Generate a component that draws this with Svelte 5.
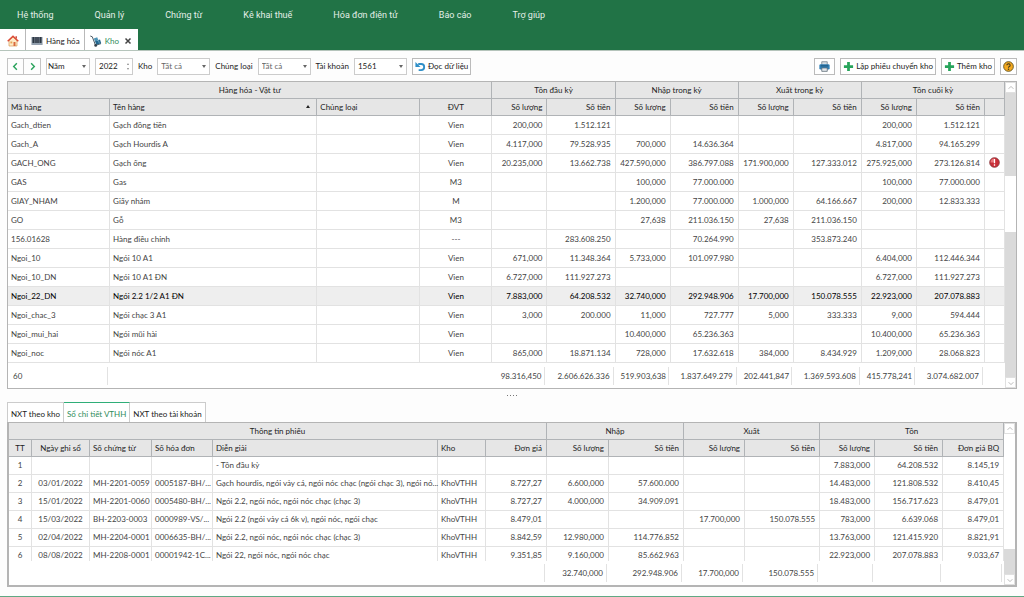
<script lang="ts">
	type Col = { label: string; w: number; align?: string; sort?: boolean };

	const menus = ['Hệ thống', 'Quản lý', 'Chứng từ', 'Kê khai thuế', 'Hóa đơn điện tử', 'Báo cáo', 'Trợ giúp'];

	const stockGroups = [
		{ label: 'Hàng hóa - Vật tư', span: 4 },
		{ label: 'Tồn đầu kỳ', span: 2 },
		{ label: 'Nhập trong kỳ', span: 2 },
		{ label: 'Xuất trong kỳ', span: 2 },
		{ label: 'Tồn cuối kỳ', span: 3 }
	];
	const stockCols: Col[] = [
		{ label: 'Mã hàng', w: 102 },
		{ label: 'Tên hàng', w: 207, sort: true },
		{ label: 'Chủng loại', w: 103 },
		{ label: 'ĐVT', w: 72, align: 'center' },
		{ label: 'Số lượng', w: 55, align: 'right' },
		{ label: 'Số tiền', w: 68, align: 'right' },
		{ label: 'Số lượng', w: 55, align: 'right' },
		{ label: 'Số tiền', w: 68, align: 'right' },
		{ label: 'Số lượng', w: 55, align: 'right' },
		{ label: 'Số tiền', w: 68, align: 'right' },
		{ label: 'Số lượng', w: 55, align: 'right' },
		{ label: 'Số tiền', w: 68, align: 'right' },
		{ label: '', w: 20, align: 'center' }
	];
	const stock = [
		['Gach_dtien', 'Gạch đồng tiền', '', 'Vien', '200,000', '1.512.121', '', '', '', '', '200,000', '1.512.121', ''],
		['Gach_A', 'Gạch Hourdis A', '', 'Vien', '4.117,000', '79.528.935', '700,000', '14.636.364', '', '', '4.817,000', '94.165.299', ''],
		['GACH_ONG', 'Gạch ống', '', 'Vien', '20.235,000', '13.662.738', '427.590,000', '386.797.088', '171.900,000', '127.333.012', '275.925,000', '273.126.814', '!'],
		['GAS', 'Gas', '', 'M3', '', '', '100,000', '77.000.000', '', '', '100,000', '77.000.000', ''],
		['GIAY_NHAM', 'Giấy nhám', '', 'M', '', '', '1.200,000', '77.000.000', '1.000,000', '64.166.667', '200,000', '12.833.333', ''],
		['GO', 'Gỗ', '', 'M3', '', '', '27,638', '211.036.150', '27,638', '211.036.150', '', '', ''],
		['156.01628', 'Hàng điều chỉnh', '', '---', '', '283.608.250', '', '70.264.990', '', '353.873.240', '', '', ''],
		['Ngoi_10', 'Ngói 10 A1', '', 'Vien', '671,000', '11.348.364', '5.733,000', '101.097.980', '', '', '6.404,000', '112.446.344', ''],
		['Ngoi_10_DN', 'Ngói 10 A1 ĐN', '', 'Vien', '6.727,000', '111.927.273', '', '', '', '', '6.727,000', '111.927.273', ''],
		['Ngoi_22_DN', 'Ngói 2.2 1/2 A1 ĐN', '', 'Vien', '7.883,000', '64.208.532', '32.740,000', '292.948.906', '17.700,000', '150.078.555', '22.923,000', '207.078.883', ''],
		['Ngoi_chac_3', 'Ngói chạc 3 A1', '', 'Vien', '3,000', '200.000', '11,000', '727.777', '5,000', '333.333', '9,000', '594.444', ''],
		['Ngoi_mui_hai', 'Ngói mũi hài', '', 'Vien', '', '', '10.400,000', '65.236.363', '', '', '10.400,000', '65.236.363', ''],
		['Ngoi_noc', 'Ngói nóc A1', '', 'Vien', '865,000', '18.871.134', '728,000', '17.632.618', '384,000', '8.434.929', '1.209,000', '28.068.823', '']
	];
	const stockTotal = ['60', '', '', '', '98.316,450', '2.606.626.336', '519.903,638', '1.837.649.279', '202.441,847', '1.369.593.608', '415.778,241', '3.074.682.007', ''];

	const detailGroups = [
		{ label: 'Thông tin phiếu', span: 7 },
		{ label: 'Nhập', span: 2 },
		{ label: 'Xuất', span: 2 },
		{ label: 'Tồn', span: 3 }
	];
	const detailCols: Col[] = [
		{ label: 'TT', w: 23, align: 'center' },
		{ label: 'Ngày ghi sổ', w: 58, align: 'center' },
		{ label: 'Số chứng từ', w: 62 },
		{ label: 'Số hóa đơn', w: 61 },
		{ label: 'Diễn giải', w: 225 },
		{ label: 'Kho', w: 48 },
		{ label: 'Đơn giá', w: 61, align: 'right' },
		{ label: 'Số lượng', w: 62, align: 'right' },
		{ label: 'Số tiền', w: 75, align: 'right' },
		{ label: 'Số lượng', w: 61, align: 'right' },
		{ label: 'Số tiền', w: 75, align: 'right' },
		{ label: 'Số lượng', w: 55, align: 'right' },
		{ label: 'Số tiền', w: 68, align: 'right' },
		{ label: 'Đơn giá BQ', w: 61, align: 'right' }
	];
	const detail = [
		['1', '', '', '', '- Tồn đầu kỳ', '', '', '', '', '', '', '7.883,000', '64.208.532', '8.145,19'],
		['2', '03/01/2022', 'MH-2201-0059', '0005187-BH/...', 'Gạch hourdis, ngói vảy cá, ngói nóc chạc (ngói chạc 3), ngói nó...', 'KhoVTHH', '8.727,27', '6.600,000', '57.600.000', '', '', '14.483,000', '121.808.532', '8.410,45'],
		['3', '15/01/2022', 'MH-2201-0060', '0005480-BH/...', 'Ngói 2.2, ngói nóc, ngói nóc chạc (chạc 3)', 'KhoVTHH', '8.727,27', '4.000,000', '34.909.091', '', '', '18.483,000', '156.717.623', '8.479,01'],
		['4', '15/03/2022', 'BH-2203-0003', '0000989-VS/...', 'Ngói 2.2 (ngói vảy cá 6k v), ngói nóc, ngói chạc', 'KhoVTHH', '8.479,01', '', '', '17.700,000', '150.078.555', '783,000', '6.639.068', '8.479,01'],
		['5', '02/04/2022', 'MH-2204-0001', '0006635-BH/...', 'Ngói 2.2, ngói nóc, ngói nóc chạc (chạc 3)', 'KhoVTHH', '8.842,59', '12.980,000', '114.776.852', '', '', '13.763,000', '121.415.920', '8.821,91'],
		['6', '08/08/2022', 'MH-2208-0001', '00001942-1C...', 'Ngói 22, ngói nóc, ngói nóc chạc', 'KhoVTHH', '9.351,85', '9.160,000', '85.662.963', '', '', '22.923,000', '207.078.883', '9.033,67']
	];
	const detailTotal = ['', '', '', '', '', '', '', '32.740,000', '292.948.906', '17.700,000', '150.078.555', '', '', ''];

	let selected = $state(9);
	let year = $state('2022');
	let account = $state('1561');
	let panel = $state(1);
	const panels = ['NXT theo kho', 'Sổ chi tiết VTHH', 'NXT theo tài khoản'];
</script>

{#snippet scrollbar(before: number, thumb: number, after: number)}
	<div class="scrollbar">
		<button aria-label="Cuộn lên"><svg viewBox="0 0 10 10"><path d="M2 6l3-3 3 3" /></svg></button>
		<div class="track">
			<div style="flex: {before}"></div>
			<div class="thumb" style="flex: {thumb}"></div>
			<div style="flex: {after}"></div>
		</div>
		<button aria-label="Cuộn xuống"><svg viewBox="0 0 10 10"><path d="M2 4l3 3 3-3" /></svg></button>
	</div>
{/snippet}

{#snippet head(groups: { label: string; span: number }[], cols: Col[])}
	<colgroup>
		{#each cols as col}<col style="width: {col.w}px" />{/each}
	</colgroup>
	<thead>
		<tr>
			{#each groups as group}<th class="center" colspan={group.span}>{group.label}</th>{/each}
		</tr>
		<tr>
			{#each cols as col}
				<th class={col.align}>{col.label}{#if col.sort}<i class="sort"></i>{/if}</th>
			{/each}
		</tr>
	</thead>
{/snippet}

<div class="app">
	<header>
		<nav class="menu">
			{#each menus as menu}<a href="#menu">{menu}</a>{/each}
		</nav>
		<div class="tabs">
			<button class="home" aria-label="Trang chủ">
				<svg viewBox="0 0 12 12">
					<path d="M2 5.5V11h8V5.5L6 2z" fill="#fdebc8" stroke="#d99a55" stroke-width=".7" />
					<path d="M8.5 1.2h1.4V4L8.5 2.8z" fill="#c8402f" />
					<path d="M.7 6.3 6 1.3l5.3 5" fill="none" stroke="#dc4a36" stroke-width="1.5" />
					<path d="M3.4 6.5h1.9v1.9H3.4z" fill="#e5a052" /><path d="M6.5 7h2v4h-2z" fill="#d8693e" />
				</svg>
			</button>
			<button>
				<svg viewBox="0 0 12 12">
					<path d="M.5 2h11v8H.5z" fill="#8592a0" />
					<path d="M1 2h10v6H1z" fill="#5a6673" />
					<path d="M2.5 2v6M5 2v6M7 2v6M9.5 2v6" stroke="#212a35" stroke-width=".8" />
					<path d="M1 9h10" stroke="#aab8c6" stroke-width=".8" />
				</svg>
				Hàng hóa
			</button>
			<button class="active">
				<svg viewBox="0 0 12 12">
					<path d="M.3 1l2 .8 3.2 8.5 5.5-1.7" fill="none" stroke="#4b5963" stroke-width="1" />
					<path d="M3.8 3.6l3.4-1.4 1.2 3-3.4 1.3z" fill="#4f95b8" />
					<path d="M5 6.3l5-1.8 1.2 3.7-4.9 1.5z" fill="#23668d" />
					<path d="M7 5.7l1.3-.4 1 2.9" fill="none" stroke="#8dc0d8" stroke-width=".6" />
					<circle cx="5.7" cy="10.4" r="1.4" fill="#35424c" />
				</svg>
				Kho
				<svg class="close" viewBox="0 0 8 8"><path d="M1.5 1.5l5 5m0-5l-5 5" /></svg>
			</button>
		</div>
	</header>

	<div class="toolbar">
		<div class="pager">
			<button aria-label="Kỳ trước"><svg viewBox="0 0 10 10"><path d="M6.5 1.5L3 5l3.5 3.5" /></svg></button>
			<button aria-label="Kỳ sau"><svg viewBox="0 0 10 10"><path d="M3.5 1.5L7 5 3.5 8.5" /></svg></button>
		</div>
		<div class="select period">
			<select aria-label="Kỳ"><option>Năm</option><option>Quý</option><option>Tháng</option></select>
		</div>
		<div class="spin">
			<input aria-label="Năm" bind:value={year} />
			<span class="arrows"><i class="up"></i><i class="down"></i></span>
		</div>
		<label for="kho">Kho</label>
		<div class="select muted">
			<select id="kho"><option>Tất cả</option></select>
		</div>
		<label for="loai">Chủng loại</label>
		<div class="select muted">
			<select id="loai"><option>Tất cả</option></select>
		</div>
		<label for="tk">Tài khoản</label>
		<div class="select">
			<select id="tk" bind:value={account}><option>1561</option><option>1562</option></select>
		</div>
		<button class="btn">
			<svg viewBox="0 0 12 12">
				<path d="M3.5 3.3h3.2a3.3 3.3 0 0 1 0 6.7H4" fill="none" stroke="#2f8fc8" stroke-width="2" />
				<path d="M.5 1v5.5H6z" fill="#2f8fc8" />
			</svg>
			Đọc dữ liệu
		</button>
		<span class="spacer"></span>
		<button class="btn icon" aria-label="In">
			<svg viewBox="0 0 12 12">
				<path d="M3 .8h6V5H3z" fill="#d5dde3" stroke="#6b7883" stroke-width=".8" />
				<rect x=".4" y="3.5" width="11.2" height="5.8" rx="1.5" fill="#2f7fb5" />
				<path d="M2 5.3h8" stroke="#1b4a6c" stroke-width=".9" />
				<path d="M3 7.6h6v3.7H3z" fill="#e3e8ec" stroke="#53616d" stroke-width=".8" />
			</svg>
		</button>
		<button class="btn">
			<svg viewBox="0 0 12 12"><path d="M6 1v10M1 6h10" stroke="#27a45b" stroke-width="3" /></svg>
			Lập phiếu chuyển kho
		</button>
		<button class="btn">
			<svg viewBox="0 0 12 12"><path d="M6 1v10M1 6h10" stroke="#27a45b" stroke-width="3" /></svg>
			Thêm kho
		</button>
		<button class="btn help" aria-label="Trợ giúp">
			<svg viewBox="0 0 12 12">
				<circle cx="6" cy="6" r="5.3" fill="#f4a91f" stroke="#62531f" stroke-width="1" />
				<path d="M4.2 4.7a1.8 1.6 0 1 1 2.6 1.4Q6 6.5 6 7.3" fill="none" stroke="#43391c" stroke-width="1.2" />
				<circle cx="6" cy="9" r=".8" fill="#43391c" />
			</svg>
		</button>
	</div>

	<main>
		<section class="grid stock">
			<div class="view">
				<table>
					{@render head(stockGroups, stockCols)}
					<tbody>
						{#each stock as row, r}
							<tr class:selected={r === selected} onclick={() => (selected = r)}>
								{#each row as cell, c}
									<td class={stockCols[c].align}>
										{#if cell === '!'}
											<svg class="alert" viewBox="0 0 12 12">
												<circle cx="6" cy="6" r="5.3" fill="#c92f38" stroke="#7d3036" stroke-width=".8" />
												<path d="M1.7 6a4.3 4.3 0 0 1 4.3-4.3V6z" fill="#e8777b" />
												<path d="M6 2.3v4.4M6 8v1.5" stroke="#fff" stroke-width="1.4" />
											</svg>
										{:else}{cell}{/if}
									</td>
								{/each}
							</tr>
						{/each}
					</tbody>
					<tfoot>
						<tr>
							{#each stockTotal as cell, c}
								<td class={stockCols[c].align}><div class:line={c === 0 || (c > 3 && c < 12)}>{cell}</div></td>
							{/each}
						</tr>
					</tfoot>
				</table>
			</div>
			{@render scrollbar(82, 56, 144)}
		</section>

		<div class="splitter"><i></i><i></i><i></i><i></i></div>

		<div class="panels">
			{#each panels as name, i}
				<button class:active={i === panel} onclick={() => (panel = i)}>{name}</button>
			{/each}
		</div>

		<section class="grid detail">
			<div class="view">
				<table>
					{@render head(detailGroups, detailCols)}
					<tbody>
						{#each detail as row}
							<tr>
								{#each row as cell, c}<td class={detailCols[c].align}>{cell}</td>{/each}
							</tr>
						{/each}
					</tbody>
					<tfoot>
						<tr>
							{#each detailTotal as cell, c}
								<td class={detailCols[c].align}><div class:line={c > 5}>{cell}</div></td>
							{/each}
						</tr>
					</tfoot>
				</table>
			</div>
			{@render scrollbar(0, 117, 26)}
		</section>
	</main>
</div>

<style>
	:global(body) {
		margin: 0;
		background: #fdfdfd;
	}

	.app {
		display: flex;
		flex-direction: column;
		box-sizing: border-box;
		height: 100vh;
		border-bottom: 1px solid #5fa883;
		font: 8px/12px Lato, sans-serif;
		color: #222;
	}

	button,
	input,
	select {
		box-sizing: border-box;
		margin: 0;
		padding: 0;
		border: 0;
		border-radius: 0;
		background: none;
		font: inherit;
		color: inherit;
	}

	svg {
		display: block;
		width: 12px;
		height: 12px;
		flex: none;
	}

	header {
		background: #217346;
		border-bottom: 1px solid #b5c4bb;
	}

	.menu {
		display: flex;
		gap: 41px;
		height: 29px;
		padding-left: 17px;
		align-items: center;
	}

	.menu a {
		color: #e4efe8;
		font: 9px/12px Roboto, sans-serif;
		text-decoration: none;
	}

	.tabs {
		display: flex;
		height: 21px;
	}

	.tabs button {
		display: flex;
		align-items: center;
		gap: 3px;
		padding: 2px 4px 0 5px;
		background: #fff;
		border-right: 1px solid #b9b9b9;
	}

	.tabs .home {
		padding: 2px 6px 0 7px;
	}

	.tabs .active {
		padding-right: 6px;
		color: #2f8c5b;
		border: 0;
	}

	.tabs .close {
		width: 8px;
		height: 8px;
		margin-left: 2px;
		stroke: #444;
		stroke-width: 1.5;
	}

	.toolbar {
		display: flex;
		align-items: center;
		gap: 5px;
		height: 30px;
		padding: 0 7px;
	}

	.pager {
		display: flex;
	}

	.pager button {
		display: grid;
		place-items: center;
		width: 17px;
		height: 17px;
		border: 1px solid #c4c4c4;
	}

	.pager button + button {
		border-left: 0;
	}

	.pager svg {
		width: 9px;
		height: 9px;
		fill: none;
		stroke: #2aa35c;
		stroke-width: 1.6;
	}

	.select {
		position: relative;
	}

	.select::after {
		content: '';
		position: absolute;
		right: 4px;
		top: 7px;
		border: 2px solid transparent;
		border-top: 3px solid #666;
		pointer-events: none;
	}

	select {
		display: block;
		appearance: none;
		width: 53px;
		height: 17px;
		padding: 0 3px;
		border: 1px solid #ccc;
		background: #fff;
	}

	.period select {
		width: 44px;
		padding: 0 1px;
	}

	.muted {
		color: #666;
	}

	.spin {
		display: flex;
		justify-content: space-between;
		box-sizing: border-box;
		width: 38px;
		height: 17px;
		padding: 0 3px;
		border: 1px solid #ccc;
		background: #fff;
	}

	.spin input {
		width: 24px;
	}

	.arrows {
		display: flex;
		flex-direction: column;
		justify-content: center;
		gap: 3px;
	}

	.arrows i {
		border: 1px solid transparent;
	}

	.arrows .up {
		border-bottom: 2px solid #888;
	}

	.arrows .down {
		border-top: 2px solid #888;
	}

	.btn {
		display: flex;
		align-items: center;
		gap: 2px;
		height: 17px;
		padding: 0 2px;
		border: 1px solid #bbb;
		background: #fff;
		white-space: nowrap;
	}

	.btn svg {
		width: 11px;
		height: 11px;
	}

	.btn.icon {
		padding: 0 4px;
	}

	.spacer {
		flex: 1;
	}

	main {
		display: flex;
		flex-direction: column;
		flex: 1;
		min-height: 0;
		padding: 0 7px 9px;
	}

	.grid {
		display: flex;
		border: 1px solid #b4b4b4;
		background: #fff;
	}

	.view {
		flex: 1;
		min-width: 0;
		overflow: hidden;
	}

	table {
		width: 100%;
		table-layout: fixed;
		border-collapse: separate;
		border-spacing: 0;
	}

	th,
	td {
		box-sizing: border-box;
		height: 19px;
		padding: 0 4px 1px 3px;
		border-right: 1px solid #e2e2e2;
		border-bottom: 1px solid #e2e2e2;
		text-align: left;
		font-weight: normal;
		line-height: 12px;
		white-space: nowrap;
	}

	td {
		color: #444;
	}

	th {
		height: 17px;
		background: #e6e6e6;
		border-color: #b0b3b6;
		color: #222;
	}

	.center {
		padding: 0 0 1px;
		text-align: center;
	}

	.right {
		text-align: right;
	}

	.sort {
		float: right;
		margin: 4px 2px 0 0;
		border: 2px solid transparent;
		border-top: 0;
		border-bottom: 3px solid #222;
	}

	.selected td {
		background: #eee;
		color: #000;
	}

	.alert {
		width: 11px;
		height: 11px;
		margin: 0 auto;
	}

	tfoot td,
	.detail tfoot td {
		height: 25px;
		padding: 0;
		background: #fff;
		border: 0;
	}

	.detail tfoot td {
		height: 24px;
	}

	tfoot div {
		height: 18px;
		margin-right: 2px;
		padding: 0 3px 0 5px;
		line-height: 18px;
	}

	tfoot .line {
		border-right: 1px solid #e2e2e2;
	}

	.scrollbar {
		display: flex;
		flex-direction: column;
		width: 11px;
		background: #dadada;
	}

	.scrollbar button {
		display: grid;
		place-items: center;
		height: 11px;
		border: 1px solid #e0e0e0;
		background: #fff;
	}

	.scrollbar svg {
		width: 8px;
		height: 8px;
		fill: none;
		stroke: #aaa;
	}

	.track {
		display: flex;
		flex-direction: column;
		flex: 1;
	}

	.thumb {
		background: #fff;
	}

	.splitter {
		display: flex;
		justify-content: center;
		gap: 2px;
		height: 7px;
		padding-top: 6px;
	}

	.splitter i {
		width: 1px;
		height: 1px;
		background: #777;
	}

	.panels {
		display: flex;
		height: 20px;
	}

	.panels button {
		padding: 2px 3px 0;
		border: 1px solid #ccc;
		border-width: 1px 1px 0 0;
		background: #fff;
	}

	.panels button:first-child {
		border-left-width: 1px;
	}

	.panels .active {
		border-top-color: #2fae78;
		color: #2f8c5b;
	}

	.detail {
		flex: 1;
		min-height: 0;
		border-width: 2px;
		border-top-width: 1px;
	}

	.detail td {
		height: 18px;
	}

	.detail tfoot {
		position: sticky;
		bottom: 0;
	}
</style>
